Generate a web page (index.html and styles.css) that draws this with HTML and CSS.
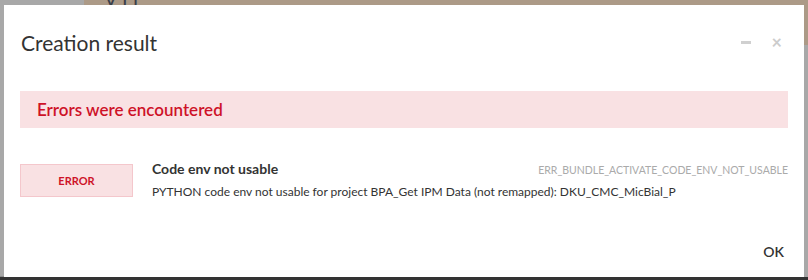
FILE: index.html
```html
<!DOCTYPE html>
<html lang="en">
<head>
    <meta charset="UTF-8">
    <title>Creation result</title>
    <link rel="stylesheet" href="styles.css">
</head>
<body>
    <div class="backdrop">
        <div class="topbar">
            <div class="topbar-gray"></div>
            <div class="topbar-brown"><span class="peek">V I I</span></div>
        </div>
        <div class="middle">
            <div class="side-left"></div>
            <div class="modal">
                <div class="modal-header">
                    <h3>Creation result</h3>
                    <div class="header-actions">
                        <span class="minimize"></span>
                        <span class="close">&times;</span>
                    </div>
                </div>
                <div class="modal-body">
                    <div class="alert">Errors were encountered</div>
                    <div class="message">
                        <div class="badge">ERROR</div>
                        <div class="message-text">
                            <div class="message-top">
                                <strong>Code env not usable</strong>
                                <span class="code">ERR_BUNDLE_ACTIVATE_CODE_ENV_NOT_USABLE</span>
                            </div>
                            <div class="details">PYTHON code env not usable for project BPA_Get IPM Data (not remapped): DKU_CMC_MicBial_P</div>
                        </div>
                    </div>
                </div>
                <div class="modal-footer">
                    <button class="btn-ok">OK</button>
                </div>
            </div>
            <div class="side-right"></div>
        </div>
        <div class="bottombar"></div>
    </div>
</body>
</html>
```

FILE: styles.css
```css
body {
    margin: 0;
    font-family: "Lato", "Noto Sans", sans-serif;
    color: #333;
}
.backdrop {
    width: 808px;
    height: 280px;
    display: flex;
    flex-direction: column;
    overflow: hidden;
}
.topbar {
    height: 5px;
    display: flex;
}
.topbar-gray { width: 84px; background: #a8a8a8; }
.topbar-brown {
    flex: 1;
    background: #ac9a87;
    overflow: hidden;
    position: relative;
}
.peek {
    position: absolute;
    left: 20px;
    top: -14px;
    font-size: 20px;
    color: #3a3f4a;
}
.middle {
    flex: 1;
    display: flex;
}
.side-left {
    width: 4px;
    background: #a8a8a8;
    border-bottom: 1px solid #8c8c8c;
}
.side-right {
    width: 4px;
    background: linear-gradient(#ac9a87 0, #ac9a87 40px, #a8a8a8 40px);
}
.modal {
    flex: 1;
    background: #fff;
    display: flex;
    flex-direction: column;
}
.bottombar {
    height: 3px;
    background: #333;
}
.modal-header {
    display: flex;
    align-items: center;
    justify-content: space-between;
    padding: 25px 22px 0 17px;
    height: 24px;
}
.modal-header h3 {
    margin: 0;
    font-size: 21px;
    font-weight: 400;
    color: #333;
}
.header-actions {
    display: flex;
    align-items: center;
    gap: 21px;
}
.minimize {
    width: 10px;
    height: 3px;
    background: #d0d0d0;
}
.close {
    font-size: 18px;
    font-weight: 700;
    color: #ccc;
    line-height: 1;
}
.modal-body {
    padding: 37px 16px 0 16px;
}
.alert {
    background: #f9e1e3;
    color: #ce1228;
    font-size: 17px;
    font-weight: 600;
    padding: 0 17px;
    height: 37px;
    line-height: 37px;
}
.message {
    display: flex;
    margin-top: 32px;
    gap: 19px;
}
.badge {
    width: 113px;
    height: 33px;
    margin-top: 4px;
    box-sizing: border-box;
    background: #f9e1e3;
    border: 1px solid #f4c7cc;
    color: #ce1228;
    font-size: 11px;
    font-weight: 700;
    display: flex;
    align-items: center;
    justify-content: center;
}
.message-text { flex: 1; }
.message-top {
    display: flex;
    justify-content: space-between;
    align-items: baseline;
}
.message-top strong {
    font-size: 14px;
    font-weight: 700;
}
.code {
    font-size: 10.5px;
    color: #aaa;
}
.details {
    font-size: 12px;
    margin-top: 7px;
}
.modal-footer {
    margin-top: auto;
    display: flex;
    justify-content: flex-end;
    padding: 0 20px 17px 0;
}
.btn-ok {
    border: none;
    background: none;
    font-family: inherit;
    font-size: 14px;
    font-weight: 600;
    color: #333;
    padding: 0;
}
```
